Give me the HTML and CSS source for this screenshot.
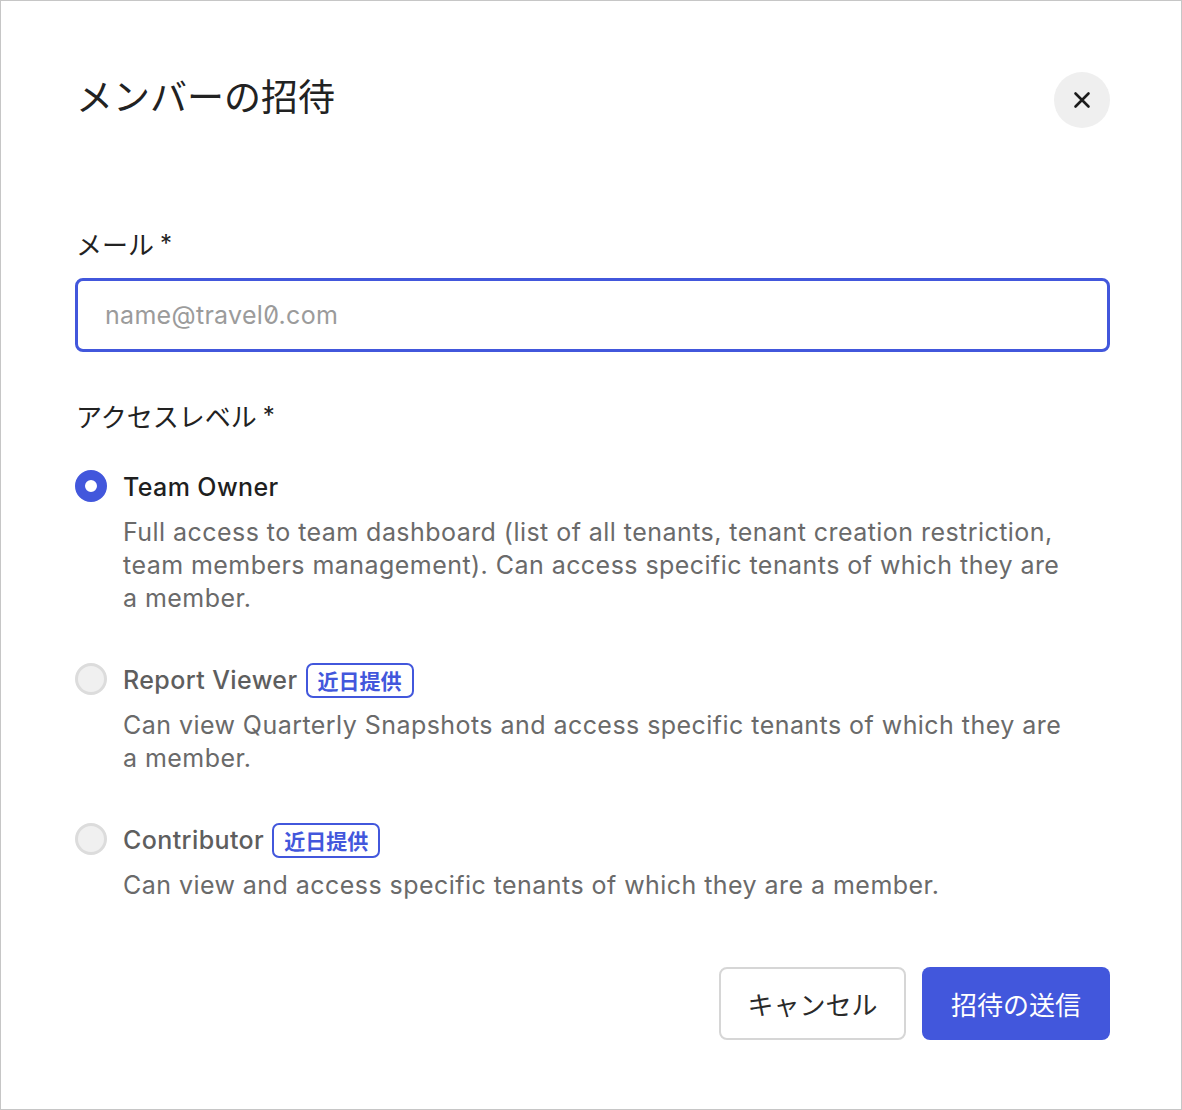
FILE: index.html
```html
<!DOCTYPE html>
<html lang="ja">
<head>
<meta charset="utf-8">
<title>メンバーの招待</title>
<link rel="stylesheet" href="styles.css">
</head>
<body>
<div class="frame">
  <div class="modal">
    <div class="header">
      <h1 class="title">メンバーの招待</h1>
      <button class="close" aria-label="close">
        <svg width="20" height="20" viewBox="0 0 20 20"><path d="M3.5 3.5 L16.5 16.5 M16.5 3.5 L3.5 16.5" stroke="#1c1c1c" stroke-width="2.6" stroke-linecap="round"/></svg>
      </button>
    </div>

    <div class="field">
      <div class="label">メール<span class="req">*</span></div>
      <div class="input"><span class="placeholder">name@travel0.com</span></div>
    </div>

    <div class="field access">
      <div class="label">アクセスレベル<span class="req">*</span></div>
      <div class="options">
        <div class="option">
          <span class="radio checked"></span>
          <div class="opt-body">
            <div class="opt-title">Team Owner</div>
            <div class="opt-desc">Full access to team dashboard (list of all tenants, tenant creation restriction, team members management). Can access specific tenants of which they are a member.</div>
          </div>
        </div>
        <div class="option disabled">
          <span class="radio"></span>
          <div class="opt-body">
            <div class="opt-title">Report Viewer <span class="badge">近日提供</span></div>
            <div class="opt-desc">Can view Quarterly Snapshots and access specific tenants of which they are a member.</div>
          </div>
        </div>
        <div class="option disabled">
          <span class="radio"></span>
          <div class="opt-body">
            <div class="opt-title">Contributor <span class="badge">近日提供</span></div>
            <div class="opt-desc">Can view and access specific tenants of which they are a member.</div>
          </div>
        </div>
      </div>
    </div>

    <div class="actions">
      <button class="btn cancel">キャンセル</button>
      <button class="btn primary">招待の送信</button>
    </div>
  </div>
</div>
</body>
</html>
```

FILE: styles.css
```css
* { box-sizing: border-box; }
html, body { margin: 0; padding: 0; background: #fff; }
body {
  font-family: Inter, "Noto Sans CJK JP", sans-serif;
  color: #1f1f1f;
}
.frame {
  width: 1182px;
  height: 1110px;
  border: 1px solid #c6c6c6;
  background: #fff;
}
.modal {
  padding: 70px 71px 0 74px;
}
.header {
  display: flex;
  justify-content: space-between;
  align-items: center;
  height: 56px;
}
.title {
  margin: 0;
  font-family: "Noto Sans CJK JP", sans-serif;
  font-weight: 400;
  font-size: 37px;
  color: #222;
  line-height: 50px;
  margin-top: -8px;
  margin-left: 1px;
}
.close {
  width: 56px;
  height: 56px;
  border-radius: 50%;
  border: none;
  background: #efefef;
  display: flex;
  align-items: center;
  justify-content: center;
  padding: 0;
  margin-top: 2px;
}
.field { margin-top: 99px; }
.field.access { margin-top: 46px; }
.label {
  display: flex;
  align-items: center;
  height: 34px;
  font-family: "Noto Sans CJK JP", sans-serif;
  font-size: 26px;
  color: #222;
  padding-left: 1px;
}
.req { margin-left: 6px; font-family: Inter, sans-serif; font-size: 24px; }
.input {
  margin-top: 18px;
  height: 74px;
  border: 3px solid #4257dc;
  border-radius: 8px;
  display: flex;
  align-items: center;
  padding-left: 27px;
}
.placeholder {
  font-size: 25px;
  letter-spacing: 0.3px;
  color: #9b9b9b;
  font-feature-settings: "zero" 1;
}
.options {
  margin-top: 37px;
  display: flex;
  flex-direction: column;
  gap: 47px;
}
.option {
  display: flex;
  gap: 16px;
}
.radio {
  flex: none;
  width: 32px;
  height: 32px;
  border-radius: 50%;
  border: 3px solid #dcdcdc;
  background: #f0f0f0;
  margin-top: 1px;
}
.radio.checked {
  border: 10.5px solid #4257dc;
  background: #fff;
}
.opt-body { flex: 1; padding-right: 40px; }
.opt-title {
  font-size: 25px;
  letter-spacing: 0.4px;
  line-height: 36px;
  font-weight: 500;
  color: #1f1f1f;
  display: flex;
  align-items: center;
  gap: 8px;
}
.disabled .opt-title { color: #5e5e5e; }
.badge {
  font-family: "Noto Sans CJK JP", sans-serif;
  font-size: 21px;
  font-weight: 700;
  letter-spacing: 0;
  color: #4257dc;
  border: 2px solid #4257dc;
  border-radius: 7px;
  padding: 0 10px;
  height: 35px;
  display: inline-flex;
  align-items: center;
}
.opt-desc {
  margin-top: 11px;
  font-size: 25px;
  letter-spacing: 0.45px;
  line-height: 33px;
  color: #6a6a6a;
}
.actions {
  margin-top: 65px;
  display: flex;
  justify-content: flex-end;
  gap: 16px;
}
.btn {
  height: 73px;
  border-radius: 8px;
  font-family: "Noto Sans CJK JP", sans-serif;
  font-size: 26px;
  padding: 0;
  white-space: nowrap;
}
.cancel {
  width: 187px;
  background: #fff;
  border: 2px solid #d6d6d6;
  color: #2a2a2a;
}
.primary {
  width: 188px;
  background: #4257dc;
  border: none;
  color: #fff;
}
```
